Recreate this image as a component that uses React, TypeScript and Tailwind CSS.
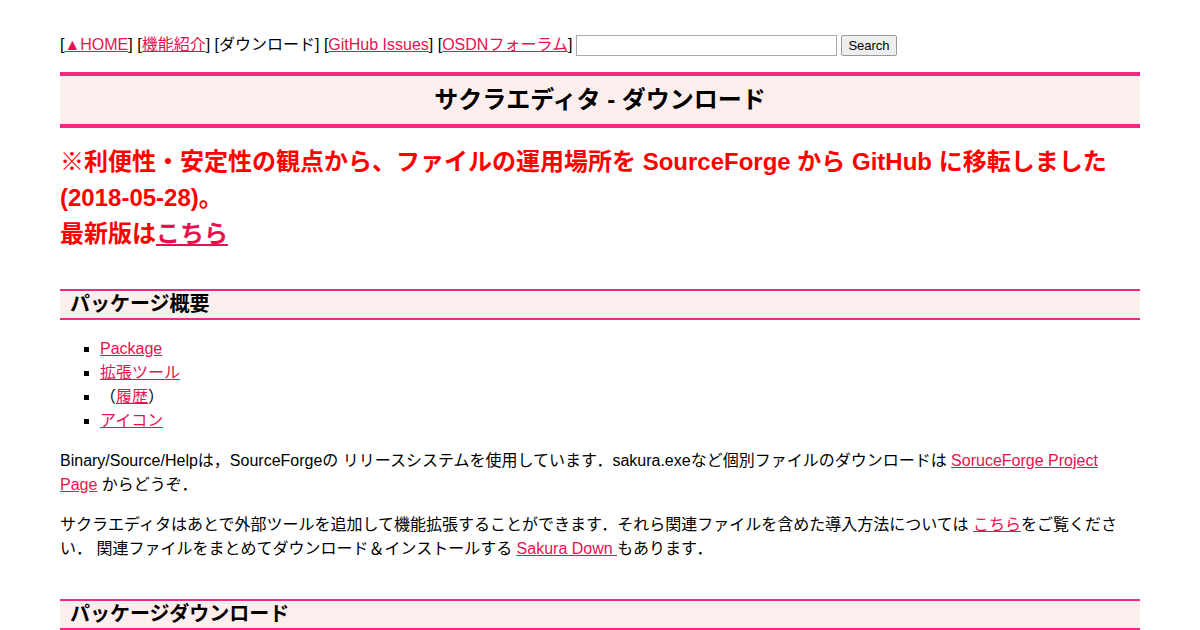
import React from "react";

const font = "font-['Liberation_Sans','Noto_Sans_CJK_JP',sans-serif]";
const link = "text-[#e8114f] underline";

function SectionTitle({ children, className }: { children: React.ReactNode; className: string }) {
  return (
    <h2
      className={`${className} border-y-2 border-[#ee2a86] bg-[#fdeeee] pl-[10px] text-[20px] font-bold leading-[27px] text-black`}
    >
      {children}
    </h2>
  );
}

export default function App() {
  return (
    <div className={`${font} min-h-[630px] bg-white px-[60px] pt-[33px] text-[16px] text-black`}>
      <div className="flex items-center leading-[24px]">
        <span>
          [<a className={link}>▲HOME</a>] [<a className={link}>機能紹介</a>] [ダウンロード] [
          <a className={link}>GitHub Issues</a>] [<a className={link}>OSDNフォーラム</a>]
        </span>
        <input
          type="text"
          className="ml-[4px] h-[21px] w-[261px] border border-[#a9a9a9] bg-white"
        />
        <button className="ml-[4px] h-[21px] rounded-[2px] border border-[#999] bg-[#eeeeee] px-[6px] text-[13px] leading-[19px]">
          Search
        </button>
      </div>

      <h1 className="mt-[15px] border-y-4 border-[#f7287f] bg-[#fdeeee] text-center text-[24px] font-bold leading-[48px]">
        サクラエディタ - ダウンロード
      </h1>

      <p className="mt-[16px] text-[24px] font-bold leading-[36px] text-[#ff0000]">
        ※利便性・安定性の観点から、ファイルの運用場所を SourceForge から GitHub に移転しました(2018-05-28)。
        <br />
        最新版は<a className="text-[#e8114f] underline">こちら</a>
      </p>

      <SectionTitle className="mt-[37px]">パッケージ概要</SectionTitle>

      <ul className="mt-[17px] list-[square] pl-[40px] leading-[24px]">
        <li>
          <a className={link}>Package</a>
        </li>
        <li>
          <a className={link}>拡張ツール</a>
        </li>
        <li>
          （<a className={link}>履歴</a>）
        </li>
        <li>
          <a className={link}>アイコン</a>
        </li>
      </ul>

      <p className="mt-[16px] pr-[6px] leading-[24px]">
        Binary/Source/Helpは，SourceForgeの リリースシステムを使用しています．sakura.exeなど個別ファイルのダウンロードは{" "}
        <a className={link}>SoruceForge Project Page</a> からどうぞ．
      </p>

      <p className="mt-[16px] leading-[24px]">
        サクラエディタはあとで外部ツールを追加して機能拡張することができます．それら関連ファイルを含めた導入方法については{" "}
        <a className={link}>こちら</a>をご覧ください． 関連ファイルをまとめてダウンロード＆インストールする{" "}
        <a className={link}>Sakura Down </a>もあります．
      </p>

      <SectionTitle className="mt-[38px]">パッケージダウンロード</SectionTitle>
    </div>
  );
}
